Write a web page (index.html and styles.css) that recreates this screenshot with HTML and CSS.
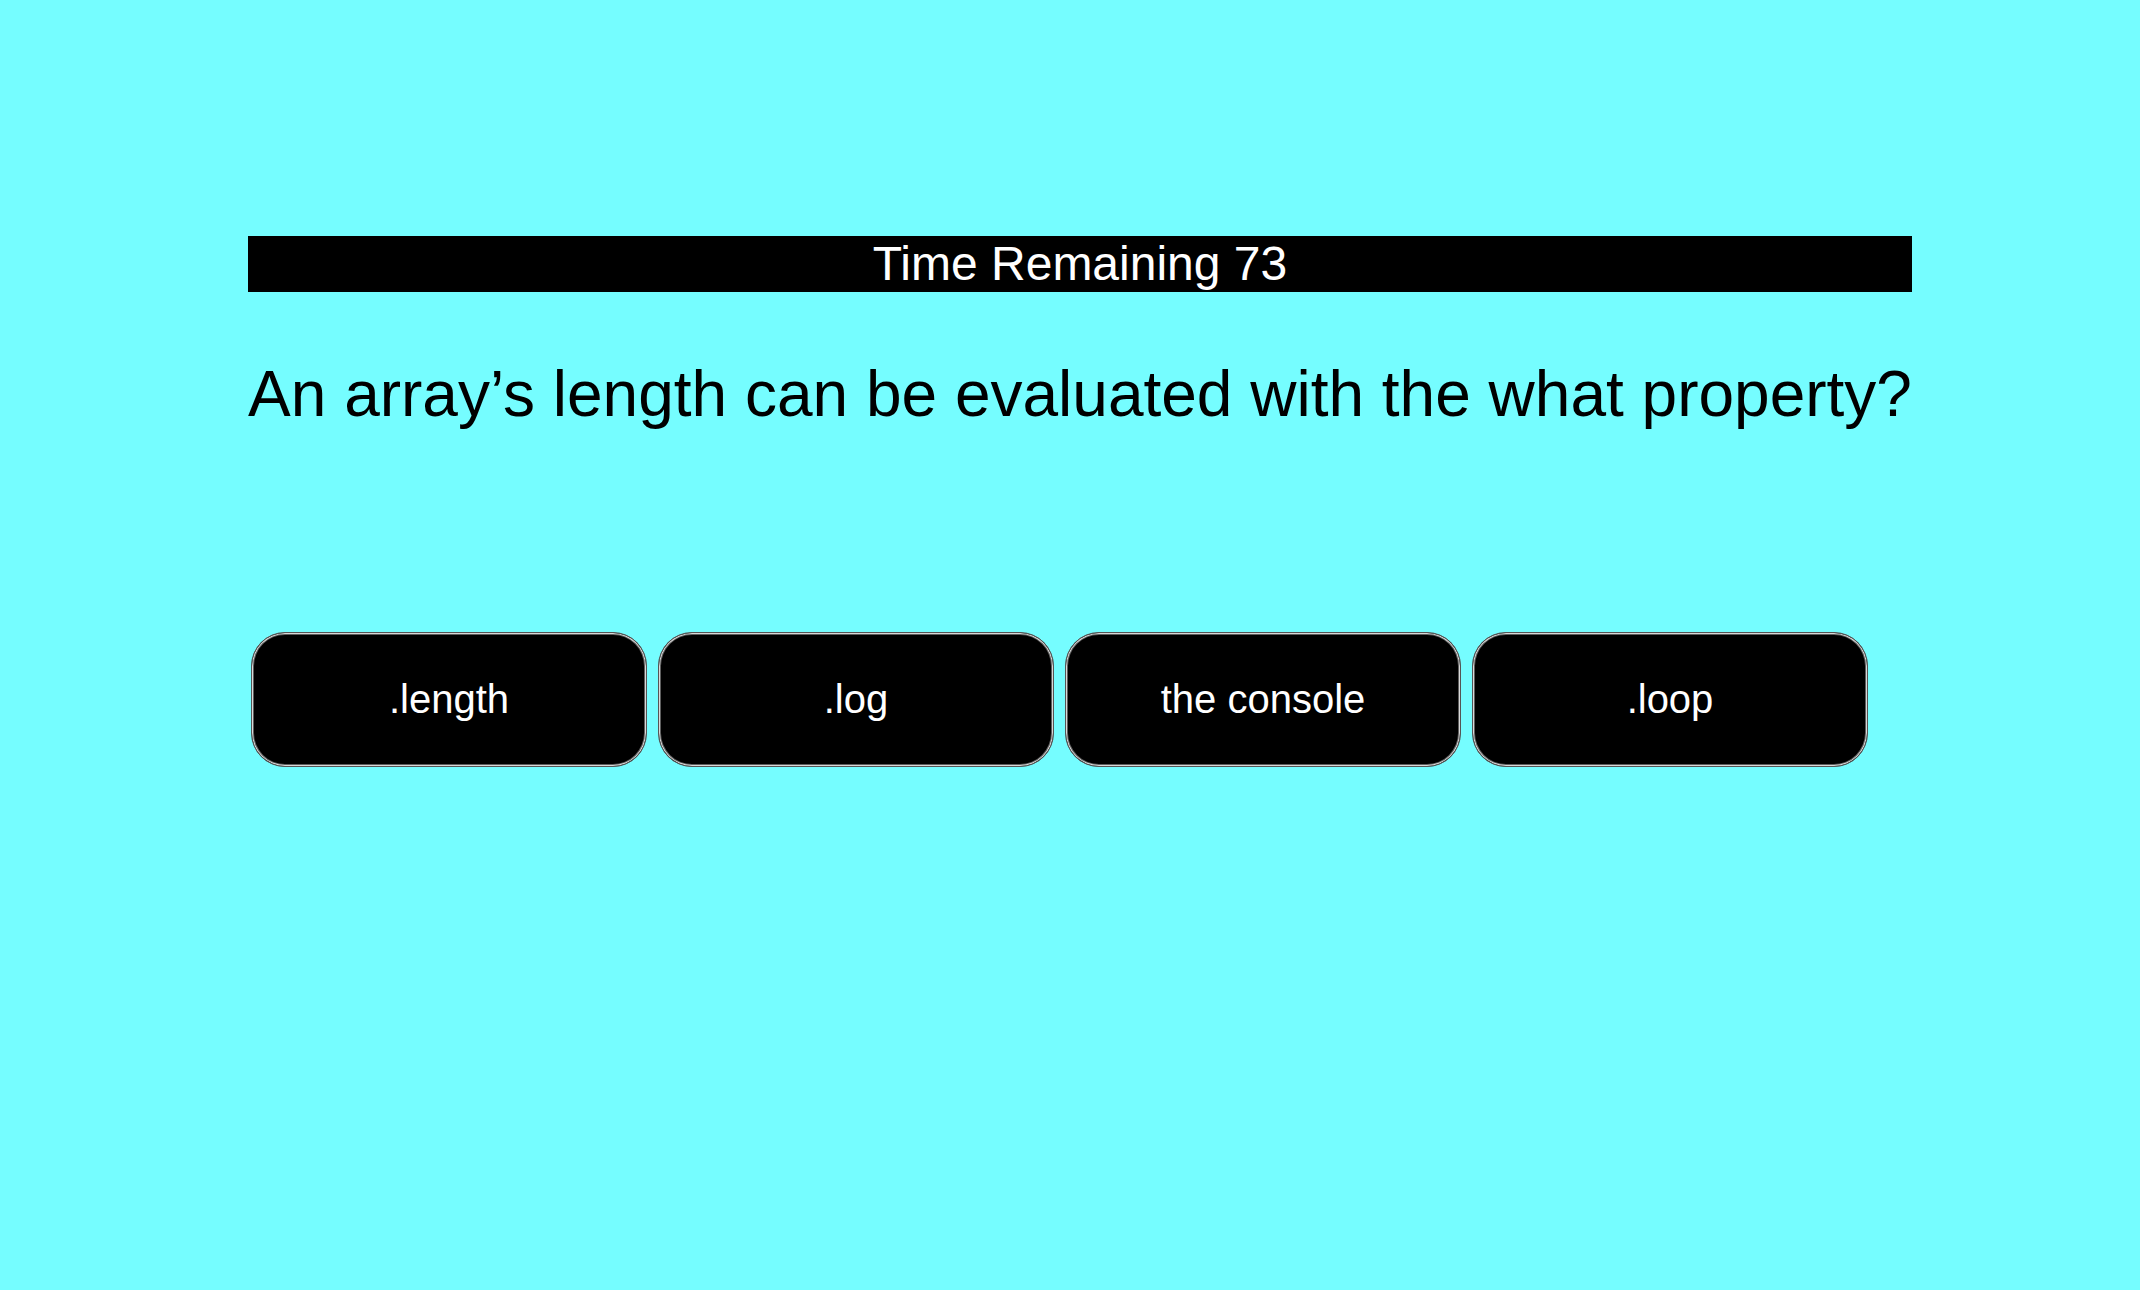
FILE: index.html
```html
<!DOCTYPE html>
<html lang="en">
<head>
<meta charset="utf-8">
<title>Quiz</title>
<link rel="stylesheet" href="styles.css">
</head>
<body>
<main class="quiz">
  <h1 class="timer">Time Remaining 73</h1>
  <h2 class="question">An array’s length can be evaluated with the what property?</h2>
  <div class="answers">
    <button class="answer">.length</button>
    <button class="answer">.log</button>
    <button class="answer">the console</button>
    <button class="answer">.loop</button>
  </div>
</main>
</body>
</html>
```
FILE: styles.css
```css
html, body {
  margin: 0;
  padding: 0;
}
body {
  background: #75fdff;
  font-family: "Liberation Sans", Arial, Helvetica, sans-serif;
  min-height: 1290px;
}
.quiz {
  width: 1664px;
  margin-left: 248px;
  padding-top: 236px;
}
.timer {
  margin: 0;
  background: #000;
  color: #fff;
  font-size: 48px;
  font-weight: normal;
  line-height: 56px;
  height: 56px;
  text-align: center;
}
.question {
  margin: 65px 0 0;
  font-size: 64px;
  font-weight: normal;
  color: #000;
  text-align: center;
  white-space: nowrap;
}
.answers {
  display: flex;
  gap: 11px;
  margin-top: 201px;
  padding-left: 3px;
}
.answer {
  width: 396px;
  height: 135px;
  background: #000;
  color: #fff;
  font-family: "Liberation Sans", Arial, Helvetica, sans-serif;
  font-size: 40px;
  border: 1px solid #555;
  border-radius: 34px;
  box-shadow: inset 0 0 0 1px #d8d8d8, inset 0 0 0 2px #5e5e5e;
  padding: 0;
  cursor: pointer;
}
```
